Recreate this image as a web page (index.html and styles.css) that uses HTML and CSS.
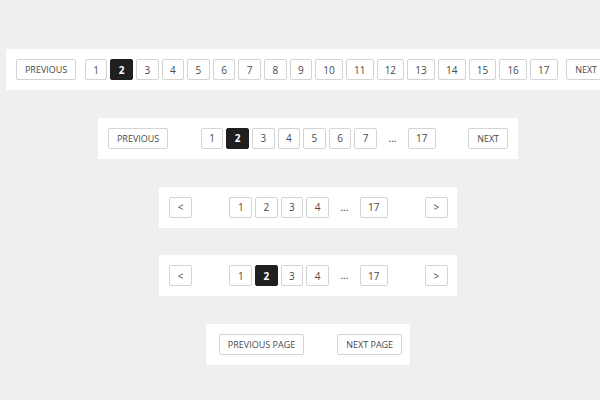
FILE: index.html
```html
<!DOCTYPE html>
<html lang="en">
<head>
<meta charset="utf-8">
<title>Pagination styles</title>
<link rel="stylesheet" href="styles.css">
</head>
<body>
<main class="stack">
  <nav class="pager pager--full">
    <a class="btn btn--label" href="#">Previous</a>
    <div class="pages">
      <a class="btn btn--num" href="#">1</a>
      <a class="btn btn--num is-active" href="#">2</a>
      <a class="btn btn--num" href="#">3</a>
      <a class="btn btn--num" href="#">4</a>
      <a class="btn btn--num" href="#">5</a>
      <a class="btn btn--num" href="#">6</a>
      <a class="btn btn--num" href="#">7</a>
      <a class="btn btn--num" href="#">8</a>
      <a class="btn btn--num" href="#">9</a>
      <a class="btn btn--num btn--wide" href="#">10</a>
      <a class="btn btn--num btn--wide" href="#">11</a>
      <a class="btn btn--num btn--wide" href="#">12</a>
      <a class="btn btn--num btn--wide" href="#">13</a>
      <a class="btn btn--num btn--wide" href="#">14</a>
      <a class="btn btn--num btn--wide" href="#">15</a>
      <a class="btn btn--num btn--wide" href="#">16</a>
      <a class="btn btn--num btn--wide" href="#">17</a>
    </div>
    <a class="btn btn--label" href="#">Next</a>
  </nav>

  <nav class="pager pager--mid">
    <a class="btn btn--label" href="#">Previous</a>
    <div class="pages">
      <a class="btn btn--num" href="#">1</a>
      <a class="btn btn--num is-active" href="#">2</a>
      <a class="btn btn--num" href="#">3</a>
      <a class="btn btn--num" href="#">4</a>
      <a class="btn btn--num" href="#">5</a>
      <a class="btn btn--num" href="#">6</a>
      <a class="btn btn--num" href="#">7</a>
      <span class="dots">...</span>
      <a class="btn btn--num btn--wide" href="#">17</a>
    </div>
    <a class="btn btn--label" href="#">Next</a>
  </nav>

  <nav class="pager pager--arrows">
    <a class="btn btn--num" href="#">&lt;</a>
    <div class="pages">
      <a class="btn btn--num" href="#">1</a>
      <a class="btn btn--num" href="#">2</a>
      <a class="btn btn--num" href="#">3</a>
      <a class="btn btn--num" href="#">4</a>
      <span class="dots">...</span>
      <a class="btn btn--num btn--wide" href="#">17</a>
    </div>
    <a class="btn btn--num" href="#">&gt;</a>
  </nav>

  <nav class="pager pager--arrows">
    <a class="btn btn--num" href="#">&lt;</a>
    <div class="pages">
      <a class="btn btn--num" href="#">1</a>
      <a class="btn btn--num is-active" href="#">2</a>
      <a class="btn btn--num" href="#">3</a>
      <a class="btn btn--num" href="#">4</a>
      <span class="dots">...</span>
      <a class="btn btn--num btn--wide" href="#">17</a>
    </div>
    <a class="btn btn--num" href="#">&gt;</a>
  </nav>

  <nav class="pager pager--simple">
    <a class="btn btn--label" href="#">Previous page</a>
    <a class="btn btn--label" href="#">Next page</a>
  </nav>
</main>
</body>
</html>
```

FILE: styles.css
```css
html, body {
  margin: 0;
  padding: 0;
  overflow: hidden;
  background: #efefef;
}

body {
  width: 600px;
  height: 400px;
  font-family: "Open Sans", "DejaVu Sans", sans-serif;
  color: #4a4a4a;
}

.stack {
  width: 616px;
  padding-top: 49px;
  display: flex;
  flex-direction: column;
  align-items: center;
  gap: 27.75px;
}

.pager {
  display: flex;
  align-items: center;
  padding: 10px;
  background: #fff;
  flex-shrink: 0;
}

.pager--full {
  gap: 8.5px;
  margin-left: 6px;
}

.pager--mid {
  gap: 32.5px;
}

.pager--arrows {
  gap: 37.5px;
  padding-right: 9px;
}

.pager--simple {
  gap: 33px;
  padding-left: 13px;
  padding-right: 8px;
}

.pages {
  display: flex;
  align-items: center;
  gap: 3px;
}

.btn {
  box-sizing: border-box;
  height: 21px;
  display: flex;
  align-items: center;
  justify-content: center;
  border: 1px solid #d4d4d4;
  border-radius: 2px;
  background: #fff;
  color: #4a4a4a;
  text-decoration: none;
  white-space: nowrap;
}

.btn--label {
  padding: 0 8px;
  font-size: 9px;
  text-transform: uppercase;
}

.btn--num {
  width: 22.6px;
  font-size: 10px;
}

.btn--wide {
  width: 27.7px;
}

.btn.is-active {
  background: #1f1f1f;
  border-color: #1f1f1f;
  color: #fff;
  font-weight: 700;
}

.dots {
  width: 25px;
  text-align: center;
  font-size: 9.5px;
  color: #444;
  font-weight: 600;
}
```
